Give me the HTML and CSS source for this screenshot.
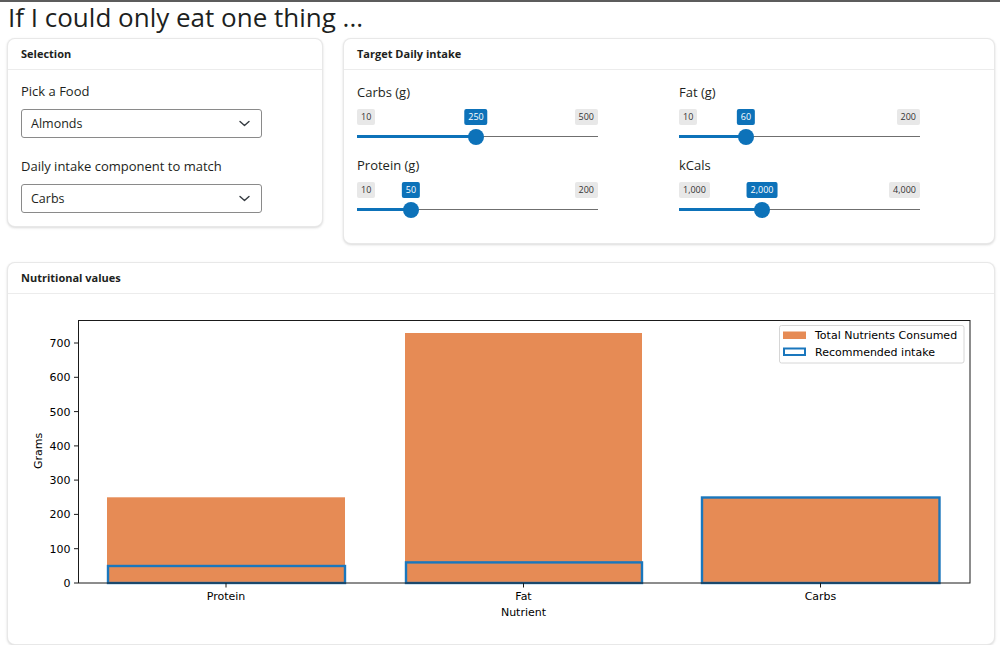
FILE: index.html
```html
<!DOCTYPE html>
<html lang="en">
<head>
<meta charset="utf-8">
<title>If I could only eat one thing ...</title>
<link rel="stylesheet" href="styles.css">
</head>
<body>
<div class="page">
  <h1 class="title">If I could only eat one thing ...</h1>
  <div class="top-row">
    <section class="card">
      <header class="card-header">Selection</header>
      <div class="card-body sel-body">
        <label class="field-label">Pick a Food</label>
        <div class="select">
          <span>Almonds</span>
          <svg class="chev" width="11" height="7" viewBox="0 0 11 7"><polyline points="1,1.5 5.5,5.5 10,1.5" fill="none" stroke="#343a40" stroke-width="1.4" stroke-linecap="round" stroke-linejoin="round"/></svg>
        </div>
        <label class="field-label second">Daily intake component to match</label>
        <div class="select">
          <span>Carbs</span>
          <svg class="chev" width="11" height="7" viewBox="0 0 11 7"><polyline points="1,1.5 5.5,5.5 10,1.5" fill="none" stroke="#343a40" stroke-width="1.4" stroke-linecap="round" stroke-linejoin="round"/></svg>
        </div>
      </div>
    </section>
    <section class="card">
      <header class="card-header">Target Daily intake</header>
      <div class="card-body slider-grid">
        <div class="slider-group">
          <label class="field-label">Carbs (g)</label>
          <div class="slider">
            <div class="badges"><span class="badge">10</span><span class="badge">500</span></div>
            <div class="line"></div>
            <div class="fill" style="width:119px"></div>
            <span class="badge value" style="left:119px">250</span>
            <span class="thumb" style="left:119px"></span>
          </div>
        </div>
        <div class="slider-group">
          <label class="field-label">Fat (g)</label>
          <div class="slider">
            <div class="badges"><span class="badge">10</span><span class="badge">200</span></div>
            <div class="line"></div>
            <div class="fill" style="width:67px"></div>
            <span class="badge value" style="left:67px">60</span>
            <span class="thumb" style="left:67px"></span>
          </div>
        </div>
        <div class="slider-group">
          <label class="field-label">Protein (g)</label>
          <div class="slider">
            <div class="badges"><span class="badge">10</span><span class="badge">200</span></div>
            <div class="line"></div>
            <div class="fill" style="width:54px"></div>
            <span class="badge value" style="left:54px">50</span>
            <span class="thumb" style="left:54px"></span>
          </div>
        </div>
        <div class="slider-group">
          <label class="field-label">kCals</label>
          <div class="slider">
            <div class="badges"><span class="badge">1,000</span><span class="badge">4,000</span></div>
            <div class="line"></div>
            <div class="fill" style="width:83px"></div>
            <span class="badge value" style="left:83px">2,000</span>
            <span class="thumb" style="left:83px"></span>
          </div>
        </div>
      </div>
    </section>
  </div>
  <section class="card chart-card">
    <header class="card-header">Nutritional values</header>
    <div class="card-body chart-body">
      <svg class="chart" width="958" height="322" viewBox="0 0 958 322">
        <g transform="translate(-22,-308)" font-family="DejaVu Sans, sans-serif" font-size="11" fill="#000">
          <rect x="107" y="497.3" width="238" height="85.7" fill="#e68b55"/>
          <rect x="405" y="333" width="237" height="250" fill="#e68b55"/>
          <rect x="701" y="497.3" width="239" height="85.7" fill="#e68b55"/>
          <rect x="108" y="566" width="237" height="17" fill="none" stroke="#1a77bd" stroke-width="2.4"/>
          <rect x="406" y="562.4" width="236" height="20.6" fill="none" stroke="#1a77bd" stroke-width="2.4"/>
          <rect x="702" y="497.5" width="237.5" height="85.5" fill="none" stroke="#1a77bd" stroke-width="2.4"/>
          <rect x="78.5" y="320.5" width="891.5" height="262.5" fill="none" stroke="#1a1a1a" stroke-width="1"/>
          <g stroke="#1a1a1a" stroke-width="1">
            <line x1="74" y1="583" x2="78" y2="583"/>
            <line x1="74" y1="548.7" x2="78" y2="548.7"/>
            <line x1="74" y1="514.4" x2="78" y2="514.4"/>
            <line x1="74" y1="480.1" x2="78" y2="480.1"/>
            <line x1="74" y1="445.9" x2="78" y2="445.9"/>
            <line x1="74" y1="411.6" x2="78" y2="411.6"/>
            <line x1="74" y1="377.3" x2="78" y2="377.3"/>
            <line x1="74" y1="343" x2="78" y2="343"/>
            <line x1="226" y1="583" x2="226" y2="587.5"/>
            <line x1="523.5" y1="583" x2="523.5" y2="587.5"/>
            <line x1="820.5" y1="583" x2="820.5" y2="587.5"/>
          </g>
          <g text-anchor="end">
            <text x="70.5" y="587">0</text>
            <text x="70.5" y="552.7">100</text>
            <text x="70.5" y="518.4">200</text>
            <text x="70.5" y="484.1">300</text>
            <text x="70.5" y="449.9">400</text>
            <text x="70.5" y="415.6">500</text>
            <text x="70.5" y="381.3">600</text>
            <text x="70.5" y="347">700</text>
          </g>
          <g text-anchor="middle">
            <text x="226" y="600">Protein</text>
            <text x="523.5" y="600">Fat</text>
            <text x="820.5" y="600">Carbs</text>
            <text x="523.5" y="615.5">Nutrient</text>
            <text transform="translate(42,451) rotate(-90)">Grams</text>
          </g>
          <rect x="779.5" y="325.5" width="184.5" height="37.5" rx="2" fill="#fff" fill-opacity="0.8" stroke="#d6d6d6" stroke-width="1"/>
          <rect x="783" y="331.5" width="23" height="7.5" fill="#e68b55"/>
          <rect x="784" y="348.5" width="21" height="6.5" fill="none" stroke="#1a77bd" stroke-width="2"/>
          <text x="815" y="338.5">Total Nutrients Consumed</text>
          <text x="815" y="355.5">Recommended intake</text>
        </g>
      </svg>
    </div>
  </section>
</div>
</body>
</html>
```
FILE: styles.css
```css
* { box-sizing: border-box; }
html, body { margin: 0; padding: 0; background: #fff; }
body {
  border-top: 2px solid #5c5c5c;
  font-family: "Open Sans", "Noto Sans", sans-serif;
  color: #1d1f21;
}
.page {
  padding: 0 5px 0 7px;
  width: 1000px;
}
.title {
  margin: 0 0 6px 1px;
  font-size: 26px;
  line-height: 30px;
  font-weight: 400;
  color: #1d1f21;
}
.top-row {
  display: grid;
  grid-template-columns: 316px 652px;
  column-gap: 20px;
  align-items: start;
}
.card {
  background: #fff;
  border: 1px solid rgba(0,0,0,0.09);
  border-radius: 8px;
  box-shadow: 0 1px 3px rgba(0,0,0,0.10), 0 1px 2px rgba(0,0,0,0.05);
  overflow: hidden;
}
.card-header {
  height: 31px;
  padding: 0 13px;
  border-bottom: 1px solid #ececec;
  font-size: 11px;
  font-weight: 700;
  line-height: 30px;
  color: #1d1f21;
}
.sel-body {
  padding: 11px 60px 13px 13px;
  display: flex;
  flex-direction: column;
}
.field-label {
  display: block;
  font-size: 13px;
  line-height: 21px;
  color: #1d1f21;
  margin-bottom: 7px;
}
.field-label.second { margin-top: 18px; }
.select {
  height: 29px;
  border: 1px solid #8a8a8a;
  border-radius: 3px;
  display: flex;
  align-items: center;
  justify-content: space-between;
  padding: 0 11px 0 9px;
  font-size: 12.5px;
  color: #1d1f21;
}
.chev { display: block; }
.slider-grid {
  padding: 12px 14px 25px 13px;
  display: grid;
  grid-template-columns: 306px 306px;
  column-gap: 16px;
  row-gap: 10px;
}
.slider-group .field-label { margin-bottom: 6px; }
.slider {
  position: relative;
  width: 241px;
  height: 36px;
}
.badges {
  display: flex;
  justify-content: space-between;
}
.badge {
  display: inline-block;
  height: 16px;
  padding: 0 4px;
  background: #e8e8e8;
  border-radius: 2px;
  font-size: 9px;
  line-height: 16px;
  color: #333;
}
.line {
  position: absolute;
  left: 0;
  right: 0;
  top: 27px;
  height: 1px;
  background: #6f6f6f;
}
.fill {
  position: absolute;
  left: 0;
  top: 26px;
  height: 3px;
  background: #0d72b9;
}
.badge.value {
  position: absolute;
  top: 0;
  transform: translateX(-50%);
  background: #0d72b9;
  color: #fff;
}
.thumb {
  position: absolute;
  top: 20px;
  width: 16px;
  height: 16px;
  margin-left: -8px;
  border-radius: 50%;
  background: #0d72b9;
}
.chart-card {
  margin-top: 18px;
  width: 988px;
}
.chart-body {
  padding: 14px;
}
.chart { display: block; }
```
